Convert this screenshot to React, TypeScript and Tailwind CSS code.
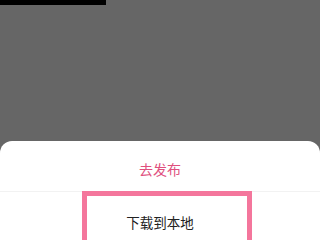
import React from "react";

const App: React.FC = () => {
  return (
    <div
      className="relative flex h-[240px] w-[320px] flex-col overflow-hidden bg-[#666666]"
      style={{ fontFamily: '"Noto Sans CJK SC", "Noto Sans", sans-serif' }}
    >
      <div className="h-[5px] w-[106px] bg-black" />
      <div className="flex-1" />
      <div className="h-[99px] rounded-t-[12px] bg-white">
        <div className="flex h-[51px] items-center justify-center border-b border-[#f2f2f2] pt-[6px] text-[14px] text-[#e0507e]">
          去发布
        </div>
        <div className="-mt-px ml-[82px] h-[56px] w-[170px] border-[5px] border-[#f4769c] pr-[14px] pt-[16px] text-center text-[13.5px] leading-[20px] text-[#222222]">
          下载到本地
        </div>
      </div>
    </div>
  );
};

export default App;
